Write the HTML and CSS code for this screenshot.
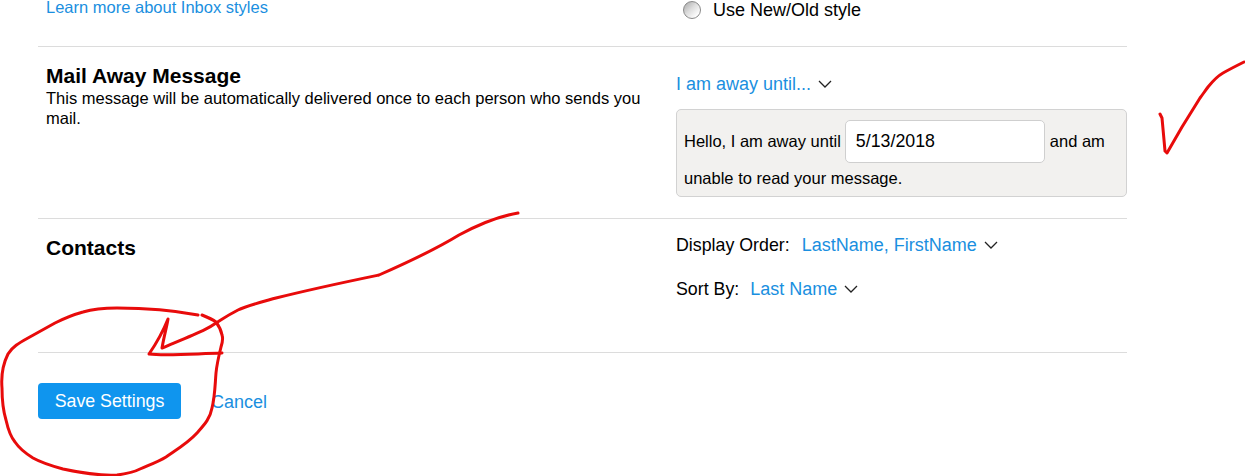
FILE: index.html
```html
<!DOCTYPE html>
<html lang="en">
<head>
<meta charset="utf-8">
<title>Mail Settings</title>
<link rel="stylesheet" href="styles.css">
</head>
<body>
<main class="page">
  <section class="row row-style">
    <div class="left"><a class="link link-small">Learn more about Inbox styles</a></div>
    <div class="right radio-line"><span class="radio"></span><span>Use New/Old style</span></div>
  </section>
  <section class="row row-away">
    <div class="left">
      <h2 class="title title-away">Mail Away Message</h2>
      <p class="desc">This message will be automatically delivered once to each person who sends you mail.</p>
    </div>
    <div class="right">
      <div class="select select-away"><a class="link">I am away until...</a><svg class="chev" viewBox="0 0 14 8"><path d="M1 1l6 6 6-6"/></svg></div>
      <div class="away-box">
        <div class="away-line"><span>Hello, I am away until</span><input class="date" type="text" value="5/13/2018"><span>and am</span></div>
        <div class="away-end">unable to read your message.</div>
      </div>
    </div>
  </section>
  <section class="row row-contacts">
    <div class="left"><h2 class="title title-contacts">Contacts</h2></div>
    <div class="right">
      <div class="select select-order"><span class="label">Display Order:</span><a class="link">LastName, FirstName</a><svg class="chev" viewBox="0 0 14 8"><path d="M1 1l6 6 6-6"/></svg></div>
      <div class="select select-sort"><span class="label">Sort By:</span><a class="link">Last Name</a><svg class="chev" viewBox="0 0 14 8"><path d="M1 1l6 6 6-6"/></svg></div>
    </div>
  </section>
  <footer class="actions">
    <button class="save" type="button">Save Settings</button>
    <a class="link cancel">Cancel</a>
  </footer>
</main>
<svg class="ink" viewBox="0 0 1245 476">
  <path d="M518 213C500 216 483 222 459 235C441 246 420 257 379 275C350 281 316 288 276 298C258 303 246 306 238 310C230 314 224 318 216 323C208 329 200 332 162 348C164 336 167 326 168 319C164 329 158 341 149 354C165 356 190 354 222 353"/>
  <path d="M198 315C172 310 143 308 117 308C104 308 93 309 83 312C72 315 63 319 55 323L28 338C19 343 12 347 8 354C3 364 1 376 2 388C2 400 3 410 6 420C8 429 10 436 15 442C19 448 25 453 33 458C42 463 52 466 63 469C82 473 100 476 117 475C125 474 132 473 140 469C149 465 158 462 166 457C176 450 188 443 197 433C204 425 210 419 212 408C215 396 215 385 216 373C217 363 219 355 221 347C223 341 223 338 222 335C221 330 219 326 216 322C212 319 207 317 202 315"/>
  <path d="M1244 62C1236 66 1230 69 1223 73C1216 77 1212 82 1208 87C1205 91 1203 94 1200 98L1182 127L1167 153L1165 151C1164 140 1163 128 1162 118L1160 114"/>
</svg>
</body>
</html>
```
FILE: styles.css
```css
html, body { margin: 0; padding: 0; background: #fff; }
body { width: 1245px; height: 476px; overflow: hidden; position: relative; font-family: "Liberation Sans", Arial, sans-serif; font-size: 16px; color: #000; }
.page { width: 1089px; margin: -4px 0 0 38px; }
.row { display: flex; border-bottom: 1px solid #dcdcdc; box-sizing: border-box; }
.row-style { height: 51px; }
.row-away { height: 172px; }
.row-contacts { height: 134px; }
.left { width: 638px; box-sizing: border-box; padding: 0 30px 0 8px; }
.right { flex: 1; min-width: 0; }
.link { color: #1a8fe0; font-size: 18px; line-height: 20px; text-decoration: none; }
.link-small { font-size: 16.5px; }
.row-style .left { line-height: 20px; padding-top: 1px; }
.radio-line { display: flex; align-items: center; height: 20px; padding-top: 4px; font-size: 18px; }
.radio { width: 18px; height: 18px; margin: 0 12px 0 7px; border-radius: 50%; box-sizing: border-box; border: 1px solid #8a8a8a; background: linear-gradient(135deg, #a8a8a8 0, #dedede 45%, #fff 85%); }
.title { margin: 0; font-size: 21px; line-height: 24px; font-weight: 700; }
.title-away { margin-top: 17px; }
.title-contacts { margin-top: 17px; }
.desc { margin: 0; font-size: 16.5px; line-height: 20px; }
.select { display: flex; align-items: center; height: 20px; font-size: 18px; }
.select-away { margin-top: 27px; }
.select-order { margin-top: 16px; }
.select-sort { margin-top: 24px; }
.label { margin-right: 12px; font-size: 17.8px; }
.select-sort .label { margin-right: 11px; }
.chev { width: 14px; height: 8px; margin-left: 7px; fill: none; stroke: #222; stroke-width: 1.3; }
.away-box { box-sizing: border-box; height: 88px; margin-top: 15px; padding: 10px 7px 0; background: #f2f1ef; border: 1px solid #d2d2d2; border-radius: 5px; font-size: 16.5px; }
.away-line { display: flex; align-items: center; height: 43px; }
.date { box-sizing: border-box; width: 200px; height: 43px; margin: 0 5px 0 4px; padding: 0 10px; border: 1px solid #cfcfcf; border-radius: 5px; background: #fff; font: 17.8px "Liberation Sans", Arial, sans-serif; color: #000; outline: none; }
.away-end { margin-top: 5px; line-height: 20px; }
.actions { display: flex; align-items: center; padding-top: 30px; }
.save { width: 143px; height: 36px; border: 0; border-radius: 4px; background: #0f95ee; color: #fff; font: 17.8px "Liberation Sans", Arial, sans-serif; padding: 1px 0 0; }
.cancel { margin-left: 30px; padding-top: 1px; }
.ink { position: absolute; left: 0; top: 0; width: 1245px; height: 476px; fill: none; stroke: #e80b0b; stroke-width: 3; stroke-linecap: round; stroke-linejoin: round; pointer-events: none; }
```
